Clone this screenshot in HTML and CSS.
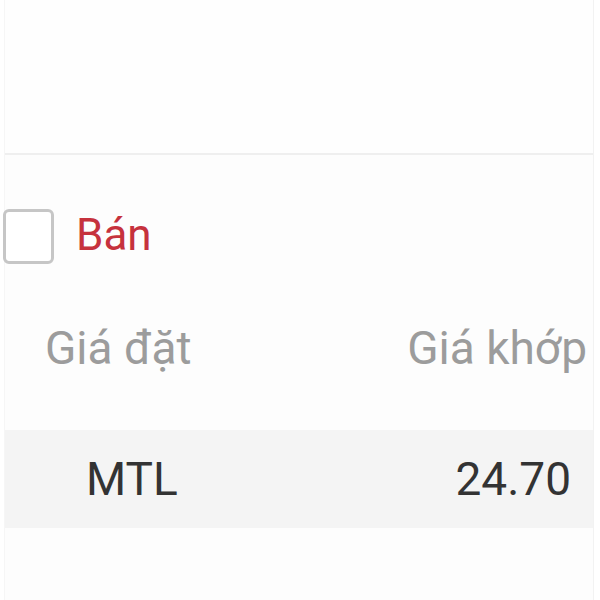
FILE: index.html
```html
<!DOCTYPE html>
<html lang="vi">
<head>
    <meta charset="UTF-8">
    <meta name="viewport" content="width=device-width, initial-scale=1.0">
    <title>Lệnh khớp</title>
    <link rel="stylesheet" href="styles.css">
</head>
<body>

    <div class="panel">
        <!-- khoảng trống phía trên -->
        <div class="top-space"></div>

        <div class="filter">
            <span class="checkbox"></span>
            <span class="filter-label">Bán</span>
        </div>

        <div class="table-head">
            <span>Giá đặt</span>
            <span>Giá khớp</span>
        </div>

        <div class="table-row">
            <span class="symbol">MTL</span>
            <span class="price">24.70</span>
        </div>
    </div>

</body>
</html>
```

FILE: styles.css
```css
body {
    font-family: Roboto, 'Noto Sans', sans-serif;
    margin: 0;
    padding: 0;
    background-color: #fff;
    color: #333;
}

.panel {
    width: 588px;
    height: 600px;
    margin-left: 4px;
    border-left: 1px solid #f6f6f6;
    border-right: 1px solid #f2f2f2;
    background-color: #fdfdfd;
}

.top-space {
    height: 153px;
    background-color: #fefefe;
    border-bottom: 2px solid #efefef;
}

.filter {
    display: flex;
    align-items: center;
    padding-top: 54px;
    height: 54px;
    margin-left: -2px;
}

.checkbox {
    box-sizing: border-box;
    width: 51px;
    height: 55px;
    border: 3px solid #c6c6c6;
    border-radius: 6px;
    background-color: #fff;
}

.filter-label {
    font-size: 44px;
    line-height: 54px;
    color: #c6323d;
    margin-left: 22px;
    margin-top: -2px;
}

.table-head {
    display: flex;
    justify-content: space-between;
    font-size: 46px;
    line-height: 54px;
    color: #9c9c9c;
    margin-top: 58px;
    padding: 0 6px 0 40px;
    height: 54px;
}

.table-row {
    display: flex;
    justify-content: space-between;
    align-items: center;
    margin-top: 55px;
    height: 98px;
    background-color: #f4f4f4;
    font-size: 46px;
    line-height: 98px;
    color: #333;
    padding: 0 22px 0 81px;
}
```
